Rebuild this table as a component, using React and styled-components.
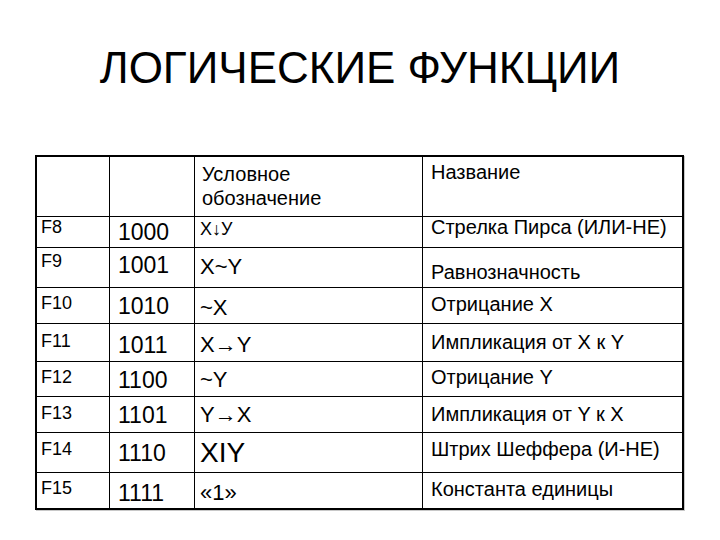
import React from "react";
import styled, { createGlobalStyle } from "styled-components";

const Global = createGlobalStyle`
  html, body { margin: 0; padding: 0; background: #fff; }
  body { font-family: "Liberation Sans", Arial, sans-serif; color: #000; }
`;

const Page = styled.div`
  width: 720px;
  height: 540px;
  display: flex;
  flex-direction: column;
  align-items: flex-start;
  background: #fff;
  overflow: hidden;
`;

const Title = styled.h1`
  margin: 0;
  width: 720px;
  padding-top: 43px;
  height: 155px;
  box-sizing: border-box;
  text-align: center;
  font-size: 44px;
  font-weight: normal;
  line-height: 50px;
`;

const Table = styled.div`
  margin-left: 35px;
  display: grid;
  grid-template-columns: 73px 85px 228px 259px;
  grid-template-rows: ${(p) => p.rows.map((r) => r + "px").join(" ")};
  border: 2px solid #000;
  box-shadow: 1px 1px 0 #c8c8c8;
`;

const Cell = styled.div`
  box-sizing: border-box;
  border-right: ${(p) => (p.last ? "none" : "1px solid #000")};
  border-bottom: ${(p) => (p.bottom ? "none" : "1px solid #000")};
  padding-left: ${(p) => p.pl}px;
  padding-top: ${(p) => p.pt}px;
  font-size: ${(p) => p.fs}px;
  line-height: ${(p) => p.lh ?? 1};
  white-space: nowrap;
`;

const rows = [
  { f: "F8", b: "1000", s: "X↓У", sf: 18, n: "Стрелка Пирса (ИЛИ-НЕ)", h: 31, fpt: 1, bpt: 4, spt: 3, npt: 0 },
  { f: "F9", b: "1001", s: "X~Y", sf: 22, n: "Равнозначность", h: 40, fpt: 4, bpt: 6, spt: 8, npt: 14 },
  { f: "F10", b: "1010", s: "~X", sf: 22, n: "Отрицание X", h: 36, fpt: 6, bpt: 7, spt: 9, npt: 6 },
  { f: "F11", b: "1011", s: "X→Y", sf: 22, n: "Импликация от X к Y", h: 38, fpt: 8, bpt: 10, spt: 10, npt: 8 },
  { f: "F12", b: "1100", s: "~Y", sf: 22, n: "Отрицание Y", h: 35, fpt: 6, bpt: 7, spt: 7, npt: 5 },
  { f: "F13", b: "1101", s: "Y→X", sf: 22, n: "Импликация от Y к X", h: 36, fpt: 7, bpt: 7, spt: 7, npt: 7 },
  { f: "F14", b: "1110", s: "XIY", sf: 28, n: "Штрих Шеффера (И-НЕ)", h: 40, fpt: 7, bpt: 9, spt: 6, npt: 6 },
  { f: "F15", b: "1111", s: "«1»", sf: 22, n: "Константа единицы", h: 35, fpt: 6, bpt: 9, spt: 9, npt: 6 },
];

export default function App() {
  const heights = [60, ...rows.map((r) => r.h)];
  return (
    <>
      <Global />
      <Page>
        <Title>ЛОГИЧЕСКИЕ ФУНКЦИИ</Title>
        <Table rows={heights}>
          <Cell fs={18} pl={4} pt={0} />
          <Cell fs={23} pl={9} pt={0} />
          <Cell fs={20} pl={7} pt={5} lh={1.2}>
            Условное
            <br />
            обозначение
          </Cell>
          <Cell fs={20} pl={8} pt={5} last>
            Название
          </Cell>
          {rows.map((r, i) => {
            const bottom = i === rows.length - 1;
            return (
              <React.Fragment key={r.f}>
                <Cell fs={18} pl={4} pt={r.fpt} bottom={bottom}>
                  {r.f}
                </Cell>
                <Cell fs={23} pl={8} pt={r.bpt} bottom={bottom}>
                  {r.b}
                </Cell>
                <Cell fs={r.sf} pl={5} pt={r.spt} bottom={bottom}>
                  {r.s}
                </Cell>
                <Cell fs={20} pl={8} pt={r.npt} bottom={bottom} last>
                  {r.n}
                </Cell>
              </React.Fragment>
            );
          })}
        </Table>
      </Page>
    </>
  );
}
